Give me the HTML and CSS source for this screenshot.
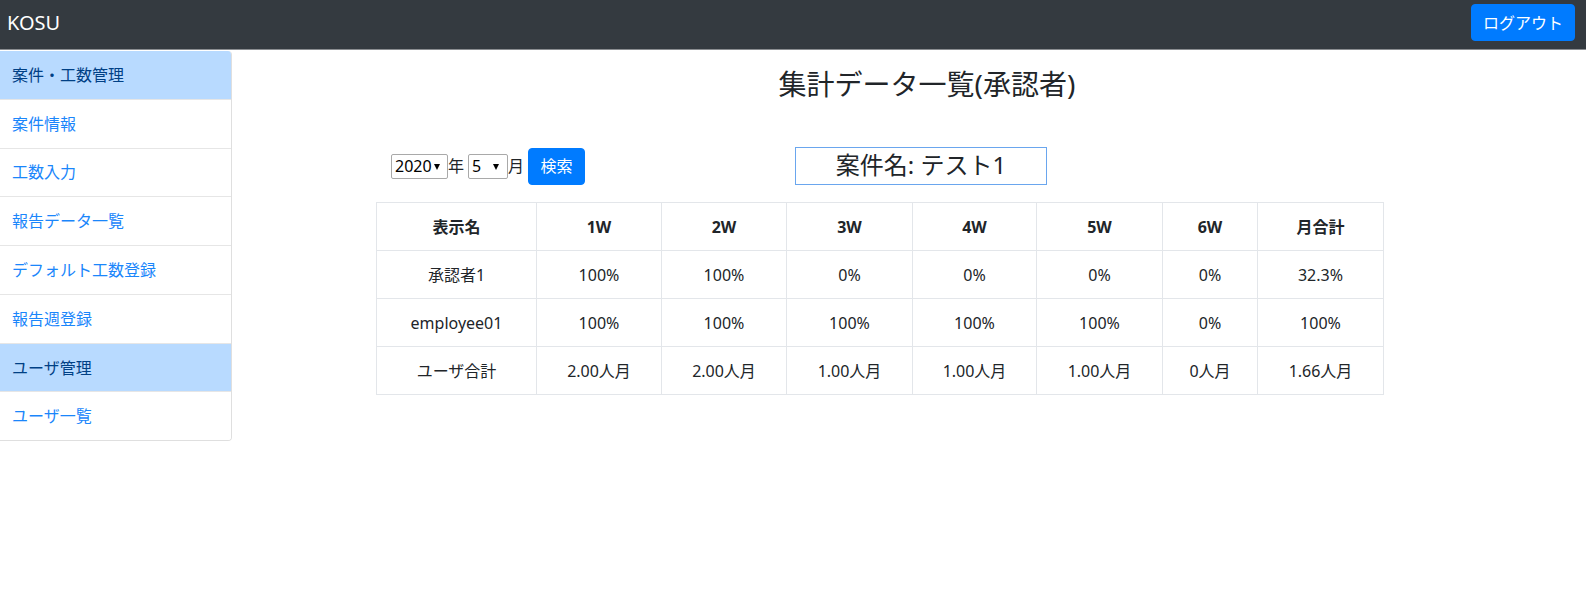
FILE: index.html
```html
<!DOCTYPE html>
<html lang="ja">
<head>
<meta charset="utf-8">
<title>KOSU</title>
<link rel="stylesheet" href="styles.css">
</head>
<body>
<header class="navbar">
  <span class="brand">KOSU</span>
  <button class="btn btn-primary logout">ログアウト</button>
</header>
<div class="layout">
  <nav class="sidebar">
    <div class="item head">案件・工数管理</div>
    <a class="item link" href="#">案件情報</a>
    <a class="item link" href="#">工数入力</a>
    <a class="item link" href="#">報告データ一覧</a>
    <a class="item link" href="#">デフォルト工数登録</a>
    <a class="item link" href="#">報告週登録</a>
    <div class="item head">ユーザ管理</div>
    <a class="item link last" href="#">ユーザ一覧</a>
  </nav>
  <main class="main">
    <h2 class="title">集計データ一覧(承認者)</h2>
    <div class="content">
      <div class="controls">
        <span class="sel sel-year"><select><option>2020</option></select></span>
        <span class="unit">年</span>
        <span class="sel sel-month"><select><option>5</option></select></span>
        <span class="unit">月</span>
        <button class="btn btn-primary search">検索</button>
        <div class="project">案件名: テスト1</div>
      </div>
      <table class="grid">
        <colgroup>
          <col style="width:160px"><col style="width:125px"><col style="width:125px"><col style="width:126px"><col style="width:124px"><col style="width:126px"><col style="width:95px"><col style="width:126px">
        </colgroup>
        <thead>
          <tr><th>表示名</th><th>1W</th><th>2W</th><th>3W</th><th>4W</th><th>5W</th><th>6W</th><th>月合計</th></tr>
        </thead>
        <tbody>
          <tr><td>承認者1</td><td>100%</td><td>100%</td><td>0%</td><td>0%</td><td>0%</td><td>0%</td><td>32.3%</td></tr>
          <tr><td>employee01</td><td>100%</td><td>100%</td><td>100%</td><td>100%</td><td>100%</td><td>0%</td><td>100%</td></tr>
          <tr><td>ユーザ合計</td><td>2.00人月</td><td>2.00人月</td><td>1.00人月</td><td>1.00人月</td><td>1.00人月</td><td>0人月</td><td>1.66人月</td></tr>
        </tbody>
      </table>
    </div>
  </main>
</div>
</body>
</html>
```
FILE: styles.css
```css
* { box-sizing: border-box; }
html, body { margin: 0; padding: 0; }
body {
  font-family: "Noto Sans", "Noto Sans CJK JP", sans-serif;
  font-size: 16px;
  line-height: 24px;
  color: #212529;
  background: #fff;
}
.navbar {
  height: 50px;
  background: #343a40;
  border-bottom: 1px solid #8a8d91;
  display: flex;
  align-items: center;
  justify-content: space-between;
  padding: 4px 11px 8px 7px;
}
.brand {
  color: #fff;
  font-size: 20px;
  line-height: 28px;
}
.btn {
  font-family: inherit;
  font-size: 16px;
  line-height: 24px;
  border: 1px solid transparent;
  border-radius: 4px;
  padding: 6px 11px;
  cursor: pointer;
}
.btn-primary { background: #007bff; border-color: #007bff; color: #fff; }
.logout { height: 37px; width: 104px; padding: 0; }
.layout {
  display: flex;
  align-items: flex-start;
  padding-top: 1px;
}
.sidebar {
  width: 232px;
  flex: none;
  display: flex;
  flex-direction: column;
  border: 1px solid #dfdfdf;
  border-left: none;
  border-top: none;
  border-radius: 0 4px 4px 0;
  overflow: hidden;
}
.item {
  display: block;
  padding: 11.9px 12px;
  line-height: 24px;
  border-bottom: 1px solid #e6e6e6;
  text-decoration: none;
}
.item.last { border-bottom: none; }
.head { background: #b8daff; color: #004085; }
.link { color: #1a86fb; background: #fff; }
.main {
  flex: 1;
  min-width: 0;
}
.title {
  margin: 16px 0 0;
  padding-left: 36px;
  text-align: center;
  font-size: 28px;
  line-height: 34px;
  font-weight: 400;
}
.content {
  margin: 46px 0 0 144px;
  width: 1007px;
}
.controls {
  display: flex;
  align-items: center;
  padding-left: 15px;
  height: 38px;
}
.sel {
  position: relative;
  display: inline-block;
  height: 25px;
}
.sel select {
  appearance: none;
  -webkit-appearance: none;
  height: 25px;
  border: 1px solid #a9a9a9;
  border-radius: 2px;
  background: #fff;
  font-family: inherit;
  font-size: 16px;
  line-height: 23px;
  color: #000;
  padding: 0 0 0 3px;
  margin: 0;
}
.sel::after {
  content: "";
  position: absolute;
  top: 10px;
  border-left: 3.5px solid transparent;
  border-right: 3.5px solid transparent;
  border-top: 6px solid #000;
  pointer-events: none;
}
.sel-year select { width: 57px; }
.sel-year::after { left: 43px; }
.sel-month select { width: 40px; }
.sel-month::after { left: 25px; }
.unit { padding: 0; margin-right: 4px; line-height: 24px; }
.search { height: 37px; width: 57px; padding: 0; margin-left: 0; }
.project {
  margin-left: 210px;
  width: 252px;
  height: 38px;
  border: 1px solid #6aa6ee;
  text-align: center;
  font-size: 24px;
  line-height: 34px;
  color: #212529;
}
.grid {
  margin-top: 17px;
  width: 1007px;
  table-layout: fixed;
  border-collapse: collapse;
}
.grid th, .grid td {
  border: 1px solid #e3e6ea;
  padding: 11.5px 4px;
  text-align: center;
  line-height: 24px;
  font-size: 16px;
}
.grid th { font-weight: 700; }
```
